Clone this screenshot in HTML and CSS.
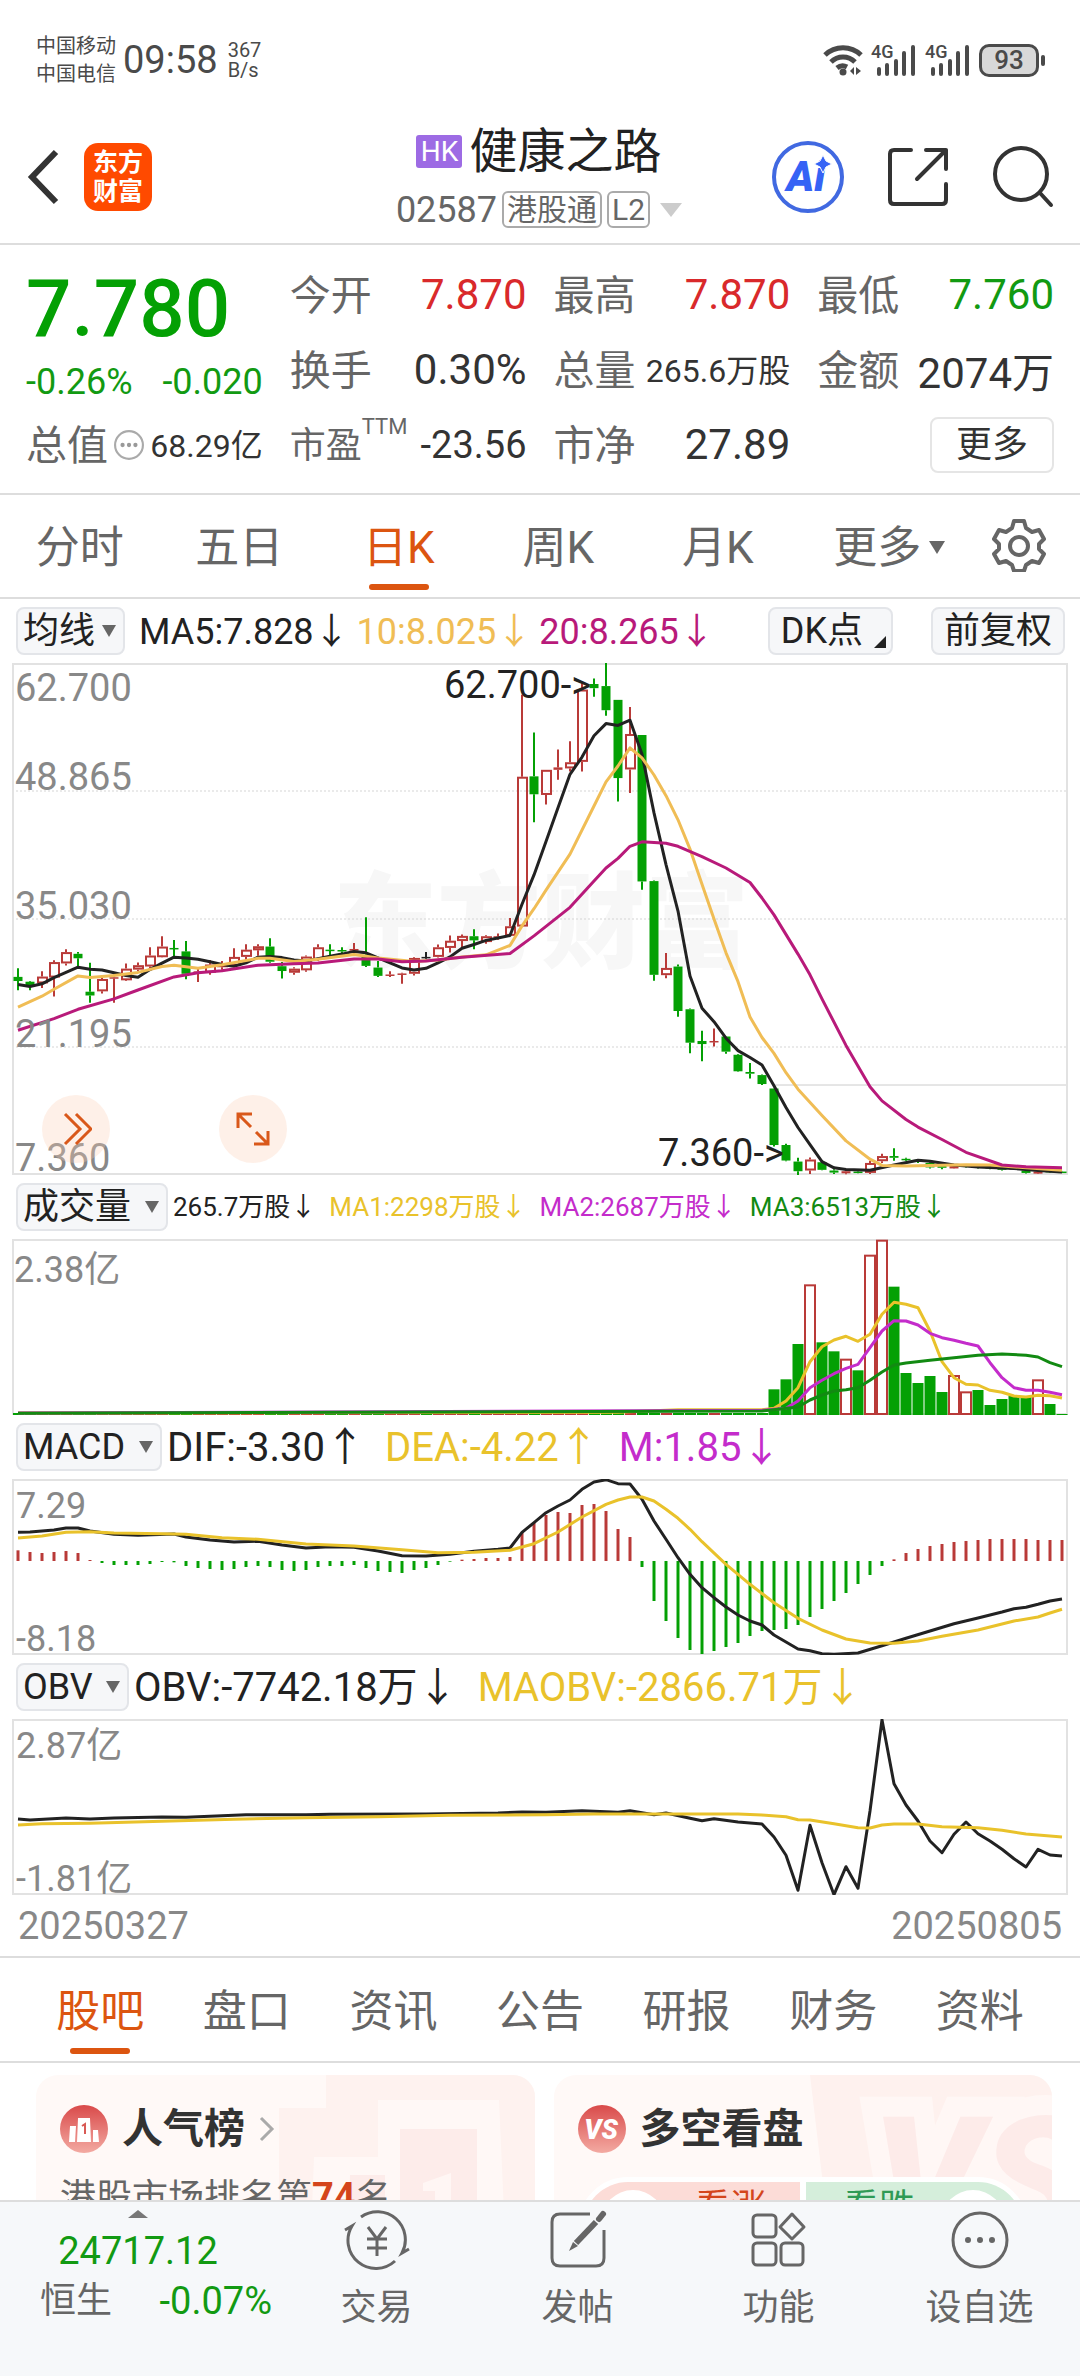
FILE: index.html
```html
<!DOCTYPE html>
<html lang="zh-CN">
<head>
<meta charset="UTF-8">
<meta name="viewport" content="width=device-width, initial-scale=1.0">
<title>健康之路 02587</title>
<link rel="stylesheet" href="styles.css">
</head>
<body>

<!-- 状态栏 -->
<div class="status">
    <div class="carriers"><span>中国移动</span><span>中国电信</span></div>
    <div class="clock">09:58</div>
    <div class="speed"><span>367</span><span>B/s</span></div>
    <div class="status-right">
        <svg class="wifi" viewBox="0 0 40 34" fill="none" stroke="#4a4a4a" stroke-width="5">
            <path d="M2 12a26 26 0 0 1 36 0"/>
            <path d="M8 19a17 17 0 0 1 24 0"/>
            <path d="M14 25a9 9 0 0 1 10-1"/>
            <circle cx="20" cy="29" r="3.5" fill="#4a4a4a" stroke="none"/>
            <path d="M27 28l4-4v8zM33 24l5 4-5 4z" fill="#4a4a4a" stroke="none"/>
        </svg>
        <div class="signal">
            <span>4G</span>
            <svg viewBox="0 0 46 34" stroke="#4a4a4a" stroke-width="4" stroke-linecap="round"><path d="M8 26v5M16 22v9M25 18v13M33 10v21M42 4v27"/></svg>
        </div>
        <div class="signal">
            <span>4G</span>
            <svg viewBox="0 0 46 34" stroke="#4a4a4a" stroke-width="4" stroke-linecap="round"><path d="M8 26v5M16 22v9M25 18v13M33 10v21M42 4v27"/></svg>
        </div>
        <div class="battery">93</div>
    </div>
</div>

<!-- 标题栏 -->
<header class="header">
    <div class="header-left">
        <button class="icon-btn" aria-label="返回">
            <svg width="36" height="56" viewBox="0 0 36 56" fill="none" stroke="#333" stroke-width="6"><path d="M32 3L8 28l24 25"/></svg>
        </button>
        <div class="logo"><span>东方</span><span>财富</span></div>
    </div>
    <div class="title">
        <h1><span class="hk">HK</span>健康之路</h1>
        <div class="code">02587<span class="tag">港股通</span><span class="tag">L2</span><i class="down"></i></div>
    </div>
    <div class="header-right">
        <button class="icon-btn" aria-label="AI">
            <svg width="72" height="72" viewBox="0 0 72 72">
                <circle cx="36" cy="36" r="34" fill="none" stroke="#4169e1" stroke-width="4"/>
                <text class="ai" x="34" y="50" text-anchor="middle">Ai</text>
                <path d="M51 14l3 6 6 3-6 3-3 6-3-6-6-3 6-3z" fill="#3563f5" stroke="#fff" stroke-width="1"/>
            </svg>
        </button>
        <button class="icon-btn" aria-label="分享">
            <svg width="64" height="62" viewBox="0 0 64 62" fill="none" stroke="#333" stroke-width="4" stroke-linecap="round" stroke-linejoin="round">
                <path d="M25 4H8q-4 0-4 4v46q0 4 4 4h48q4 0 4-4V38M40 4h20v19M60 4L31 33"/>
            </svg>
        </button>
        <button class="icon-btn" aria-label="搜索">
            <svg width="62" height="62" viewBox="0 0 62 62" fill="none" stroke="#333" stroke-width="4" stroke-linecap="round">
                <circle cx="29" cy="28" r="26"/><path d="M48 47l11 12"/>
            </svg>
        </button>
    </div>
</header>

<main>
    <!-- 行情数据 -->
    <section class="quote">
        <div class="col">
            <div class="price">7.780</div>
            <div class="change"><span>-0.26%</span><span>-0.020</span></div>
            <div class="item"><span class="name">总值</span>
                <svg width="30" height="30" viewBox="0 0 28 28"><circle cx="14" cy="14" r="13" fill="none" stroke="#aaa" stroke-width="2"/><g fill="#999"><circle cx="8" cy="14" r="2"/><circle cx="14" cy="14" r="2"/><circle cx="20" cy="14" r="2"/></g></svg>
                <span class="val small">68.29亿</span></div>
        </div>
        <div class="col">
            <div class="item"><span class="name">今开</span><span class="val red">7.870</span></div>
            <div class="item"><span class="name">换手</span><span class="val">0.30%</span></div>
            <div class="item"><span class="name pe">市盈<sup>TTM</sup></span><span class="val mid">-23.56</span></div>
        </div>
        <div class="col">
            <div class="item"><span class="name">最高</span><span class="val red">7.870</span></div>
            <div class="item"><span class="name">总量</span><span class="val small">265.6万股</span></div>
            <div class="item"><span class="name">市净</span><span class="val">27.89</span></div>
        </div>
        <div class="col">
            <div class="item"><span class="name">最低</span><span class="val green">7.760</span></div>
            <div class="item"><span class="name">金额</span><span class="val">2074万</span></div>
            <div class="item"><button class="more">更多</button></div>
        </div>
    </section>

    <!-- 周期 -->
    <nav class="tabs period">
        <button>分时</button>
        <button>五日</button>
        <button class="active">日K</button>
        <button>周K</button>
        <button>月K</button>
        <button><span class="more-tab">更多<i class="down"></i></span></button>
        <button class="gear" aria-label="设置">
            <svg width="54" height="54" viewBox="0 0 54 54" fill="none" stroke="#666" stroke-width="4" stroke-linejoin="round">
                <path d="M22 3h10l2 7 6 4 7-2 5 9-5 5v5l5 5-5 9-7-2-6 4-2 6H22l-2-6-6-4-7 2-5-9 5-5v-5l-5-5 5-9 7 2 6-4z"/>
                <circle cx="27" cy="28" r="9"/>
            </svg>
        </button>
    </nav>

    <!-- K线 -->
    <section class="panel">
        <div class="bar">
            <label class="pick tight"><select aria-label="主图指标"><option>均线</option></select></label>
            <div class="values">
                <span>MA5:7.828↓</span><span class="c-ma10">10:8.025↓</span><span class="c-ma20">20:8.265↓</span>
            </div>
            <div class="bar-right">
                <button class="chip corner">DK点</button>
                <button class="chip">前复权</button>
            </div>
        </div>
        <div class="chart">
            <svg id="kline" viewBox="0 0 1056 512"></svg>
            <button class="float first" aria-label="展开">
                <svg width="32" height="34" viewBox="0 0 32 34" fill="none" stroke="#d9581a" stroke-width="3"><path d="M5 2l15 15L5 32M16 2l15 15-15 15"/></svg>
            </button>
            <button class="float second" aria-label="全屏">
                <svg width="36" height="36" viewBox="0 0 36 36" fill="none" stroke="#d9581a" stroke-width="3"><path d="M3 17V3h14M3 3l13 13M33 20v13H19M33 33L21 21"/></svg>
            </button>
        </div>
    </section>

    <section class="panel">
        <div class="bar">
            <label class="pick"><select aria-label="副图一"><option>成交量</option></select></label>
            <div class="values vol">
                <span>265.7万股↓</span><span class="c-yellow">MA1:2298万股↓</span><span class="c-purple">MA2:2687万股↓</span><span class="c-green">MA3:6513万股↓</span>
            </div>
        </div>
        <div class="chart"><svg id="volume" viewBox="0 0 1056 176"></svg></div>
    </section>

    <section class="panel">
        <div class="bar">
            <label class="pick"><select aria-label="副图二"><option>MACD</option></select></label>
            <div class="values wide">
                <span>DIF:-3.30↑</span><span class="c-yellow">DEA:-4.22↑</span><span class="c-purple">M:1.85↓</span>
            </div>
        </div>
        <div class="chart"><svg id="macd" viewBox="0 0 1056 176"></svg></div>
    </section>

    <section class="panel">
        <div class="bar">
            <label class="pick"><select aria-label="副图三"><option>OBV</option></select></label>
            <div class="values wide">
                <span>OBV:-7742.18万↓</span><span class="c-yellow">MAOBV:-2866.71万↓</span>
            </div>
        </div>
        <div class="chart"><svg id="obv" viewBox="0 0 1056 176"></svg></div>
        <div class="dates"><span>20250327</span><span>20250805</span></div>
    </section>

    <!-- 资讯标签 -->
    <nav class="tabs info">
        <button class="active">股吧</button>
        <button>盘口</button>
        <button>资讯</button>
        <button>公告</button>
        <button>研报</button>
        <button>财务</button>
        <button>资料</button>
    </nav>

    <section class="cards">
        <div class="card">
            <svg class="deco" width="270" height="160" viewBox="0 0 270 160" aria-hidden="true">
                <path d="M61 0h209v160H14V33h47z" fill="#fef2ef"/>
                <path d="M113 25h121l6 135H46l3-78h64z" fill="#fff8f6"/>
                <path d="M135 54h77v106h-77zM85 100h35v60H83z" fill="#fdecea"/>
                <path d="M158 108l28-10v62h-16v-44h-12z" fill="#fff6f4"/>
            </svg>
            <div class="card-title">
                <svg width="48" height="48" viewBox="0 0 48 48">
                    <defs><linearGradient id="redFill" x1="0" y1="0" x2="0" y2="1"><stop offset="0" stop-color="#d94a4a"/><stop offset="1" stop-color="#f3aaa2"/></linearGradient></defs>
                    <circle cx="24" cy="24" r="24" fill="url(#redFill)"/>
                    <path d="M10 21h6l-1 16H9zM18 13h12l1 24H17zM33 25h5l1 12h-6z" fill="#fff"/>
                    <path d="M22 21l3-2v10" fill="none" stroke="#d95a55" stroke-width="2"/>
                </svg>
                <h2>人气榜</h2>
                <svg width="16" height="26" viewBox="0 0 16 26" fill="none" stroke="#aaa" stroke-width="3"><path d="M2 2l11 11L2 24"/></svg>
            </div>
            <p>港股市场排名第<b>74</b>名</p>
        </div>
        <div class="card">
            <svg class="deco" width="250" height="160" viewBox="0 0 250 160" aria-hidden="true">
                <path d="M8 0h242v160H27z" fill="#fef1ee"/>
                <text class="vs-back" x="70" y="163">VS</text>
                <text class="vs-front" x="70" y="163">VS</text>
            </svg>
            <div class="card-title">
                <svg width="48" height="48" viewBox="0 0 48 48">
                    <circle cx="24" cy="24" r="24" fill="url(#redFill)"/>
                    <text class="vs" x="23" y="34" text-anchor="middle">VS</text>
                </svg>
                <h2>多空看盘</h2>
            </div>
            <div class="vote">
                <button class="up"><i></i>看涨</button>
                <button class="fall">看跌<i></i></button>
            </div>
        </div>
    </section>
</main>

<!-- 底部栏 -->
<footer class="bottom">
    <div class="index">
        <i class="up-arrow"></i>
        <div class="index-num">24717.12</div>
        <div class="index-row"><span>恒生</span><span class="green">-0.07%</span></div>
    </div>
    <button>
        <svg width="66" height="60" viewBox="0 0 66 60" fill="none" stroke="#666" stroke-width="3">
            <path d="M17 7A28 28 0 0 1 58 43l7-4M51 51A28 28 0 0 1 8 16l-7 4"/>
            <path d="M24 17l9 12 9-12M23 29h20M23 38h20M33 29v17"/>
        </svg>
        交易
    </button>
    <button>
        <svg width="60" height="60" viewBox="0 0 60 60" fill="none" stroke="#666" stroke-width="3">
            <path d="M42 4H12q-8 0-8 8v36q0 8 8 8h36q8 0 8-8V20"/><path d="M48 12L28 33" stroke-width="6"/><path d="M55 4l-4 5" stroke-width="6" stroke-linecap="round"/><path d="M25 32l-4 9 9-5z" fill="#666" stroke="none"/>
        </svg>
        发帖
    </button>
    <button>
        <svg width="60" height="60" viewBox="0 0 60 60" fill="none" stroke="#666" stroke-width="3">
            <rect x="4" y="5" width="23" height="22" rx="4"/><rect x="4" y="33" width="23" height="22" rx="4"/><rect x="32" y="33" width="22" height="22" rx="4"/><path d="M43 4l12 13-12 12-12-12z" stroke-linejoin="round"/>
        </svg>
        功能
    </button>
    <button>
        <svg width="60" height="60" viewBox="0 0 60 60" fill="none" stroke="#666" stroke-width="3">
            <circle cx="30" cy="30" r="27"/><g fill="#666" stroke="none"><circle cx="18" cy="30" r="3"/><circle cx="30" cy="30" r="3"/><circle cx="42" cy="30" r="3"/></g>
        </svg>
        设自选
    </button>
</footer>

<script src="chart.js"></script>
</body>
</html>
```

FILE: styles.css
```css
* {
    box-sizing: border-box;
}

body {
    margin: 0;
    height: 100vh;
    display: flex;
    flex-direction: column;
    background: #fff;
    color: #333;
    font-family: Roboto, "Noto Sans CJK SC", sans-serif;
    font-size: 36px;
}

button {
    padding: 0;
    border: none;
    background: none;
    color: inherit;
    font: inherit;
    cursor: pointer;
}

h1, h2, p {
    margin: 0;
}

svg {
    display: block;
    flex: none;
}

.red { color: #d9292b; }
.green { color: #129a12; }
.c-ma10 { color: #f0bd55; }
.c-ma20 { color: #b81a7a; }
.c-yellow { color: #e9c22b; }
.c-purple { color: #c42ccb; }
.c-green { color: #128a12; }

/* 小三角 */
.down {
    display: inline-block;
    border: 11px solid transparent;
    border-top: 14px solid #ccc;
    border-bottom: none;
}

/* 状态栏 */
.status {
    flex: none;
    display: flex;
    align-items: center;
    height: 104px;
    padding: 16px 34px 0 36px;
    color: #4a4a4a;
}

.carriers {
    display: flex;
    flex-direction: column;
    font-size: 20px;
    line-height: 28px;
}

.clock {
    margin: 0 10px 0 7px;
    font-size: 38px;
}

.speed {
    display: flex;
    flex-direction: column;
    font-size: 20px;
    line-height: 20px;
}

.status-right {
    display: flex;
    align-items: center;
    gap: 8px;
    margin-left: auto;
}

.wifi {
    width: 40px;
    height: 34px;
}

.signal {
    position: relative;
    width: 46px;
    height: 34px;
}

.signal span {
    position: absolute;
    top: 0;
    left: 0;
    font-size: 18px;
    line-height: 18px;
    font-weight: 500;
}

.battery {
    position: relative;
    width: 60px;
    height: 33px;
    margin-right: 7px;
    border: 3px solid #4a4a4a;
    border-radius: 10px;
    background: #d8d8d8;
    font-size: 26px;
    line-height: 27px;
    font-weight: 500;
    text-align: center;
}

.battery::after {
    content: "";
    position: absolute;
    top: 8px;
    right: -9px;
    width: 4px;
    height: 11px;
    border-radius: 2px;
    background: #4a4a4a;
}

/* 标题栏 */
.header {
    flex: none;
    display: grid;
    grid-template-columns: 1fr auto 1fr;
    align-items: center;
    height: 141px;
    padding: 6px 26px 0 24px;
    border-bottom: 2px solid #ddd;
}

.header-left {
    display: flex;
    align-items: center;
    gap: 24px;
}

.logo {
    display: flex;
    flex-direction: column;
    align-items: center;
    justify-content: center;
    width: 68px;
    height: 68px;
    border-radius: 14px;
    background: #ff4a00;
    color: #fff;
    font-size: 25px;
    line-height: 29px;
    font-weight: 700;
}

.title {
    padding-top: 8px;
    text-align: center;
}

.title h1 {
    display: flex;
    align-items: center;
    justify-content: center;
    gap: 7px;
    font-size: 48px;
    line-height: 58px;
    font-weight: 400;
    color: #222;
}

.hk {
    width: 46px;
    height: 33px;
    border-radius: 3px;
    background: #9d6be4;
    color: #fff;
    font-size: 28px;
    line-height: 33px;
}

.code {
    display: flex;
    align-items: center;
    justify-content: center;
    gap: 5px;
    line-height: 58px;
    color: #666;
}

.tag {
    padding: 0 3px;
    border: 2px solid #aaa;
    border-radius: 6px;
    font-size: 30px;
    line-height: 33px;
}

.code .down {
    margin-left: 5px;
}

.header-right {
    display: flex;
    align-items: center;
    justify-content: flex-end;
    gap: 42px;
}

.ai {
    fill: #3563f5;
    font-family: Roboto, sans-serif;
    font-size: 42px;
    font-style: italic;
    font-weight: 900;
}

/* 行情 */
main {
    flex: 1;
    min-height: 0;
    overflow: hidden;
}

.quote {
    display: grid;
    grid-template-columns: repeat(4, 1fr);
    gap: 27px;
    height: 250px;
    padding: 12px 26px 0;
    border-bottom: 2px solid #ddd;
}

.col {
    display: flex;
    flex-direction: column;
    min-width: 0;
}

.price {
    height: 100px;
    font-size: 80px;
    line-height: 104px;
    font-weight: 500;
    color: #04a004;
}

.change {
    display: flex;
    justify-content: space-between;
    height: 50px;
    font-size: 36px;
    line-height: 50px;
    color: #129a12;
}

.item {
    display: flex;
    align-items: center;
    justify-content: space-between;
    height: 75px;
    white-space: nowrap;
}

.name {
    padding-bottom: 5px;
    font-size: 41px;
    color: #666;
}

.name.pe {
    display: flex;
    align-items: center;
    font-size: 36px;
}

.name sup {
    align-self: flex-start;
    font-size: 22px;
    line-height: 22px;
}

.val {
    font-size: 42px;
}

.val.mid {
    font-size: 38px;
}

.val.small {
    padding-bottom: 3px;
    font-size: 32px;
}

.more {
    width: 124px;
    height: 56px;
    margin-left: auto;
    border: 2px solid #e5e5e5;
    border-radius: 8px;
    font-size: 36px;
    line-height: 48px;
}

/* 标签 */
.tabs {
    display: flex;
    height: 104px;
    border-bottom: 2px solid #ddd;
    color: #666;
    font-size: 44px;
}

.tabs button {
    position: relative;
    flex: 1;
    padding-bottom: 4px;
}

.tabs .active {
    color: #dc5510;
}

.tabs .active::after {
    content: "";
    position: absolute;
    bottom: 7px;
    left: 50%;
    width: 60px;
    height: 6px;
    margin-left: -30px;
    border-radius: 3px;
    background: #dc5510;
}

.tabs .gear {
    flex: none;
    display: flex;
    align-items: center;
    justify-content: center;
    width: 123px;
    padding-bottom: 2px;
}

.more-tab {
    position: relative;
}

.more-tab .down {
    position: absolute;
    top: 19px;
    right: -24px;
    border-width: 13px 8px 0;
    border-top-color: #666;
}

.info {
    height: 105px;
    padding: 0 27px;
}

/* 图表 */
.panel {
    padding: 0 12px;
}

.bar {
    display: flex;
    align-items: center;
    height: 64px;
    padding: 0 3px 0 4px;
    color: #222;
    white-space: nowrap;
}

.pick {
    position: relative;
    display: flex;
}

.pick select, .chip {
    height: 48px;
    border: 2px solid #e3e5e9;
    border-radius: 8px;
    background: #f6f7f9;
    color: #222;
    font: inherit;
    line-height: 40px;
}

.pick select {
    appearance: none;
    padding: 0 34px 0 5px;
}

.pick::after {
    content: "";
    position: absolute;
    top: 18px;
    right: 9px;
    border: 7px solid transparent;
    border-top: 12px solid #666;
    border-bottom: none;
}

.pick.tight select {
    padding-right: 27px;
}

.values {
    display: flex;
    gap: 7px;
    padding: 0 0 6px 14px;
}

.values.vol {
    gap: 13px;
    padding-left: 5px;
    font-size: 26px;
}

.values.wide {
    gap: 20px;
    padding-left: 5px;
    font-size: 40px;
}

.bar-right {
    display: flex;
    gap: 38px;
    margin-left: auto;
}

.chip {
    position: relative;
    padding: 0 11px;
}

.chip.corner {
    padding-right: 28px;
}

.chip.corner::after {
    content: "";
    position: absolute;
    right: 5px;
    bottom: 5px;
    border: 6px solid #222;
    border-top-color: transparent;
    border-left-color: transparent;
}

.chart {
    position: relative;
}

.chart > svg {
    width: 100%;
    height: auto;
}

.chart text {
    font-family: Roboto, "Noto Sans CJK SC", sans-serif;
}

.float {
    position: absolute;
    bottom: 12px;
    display: flex;
    align-items: center;
    justify-content: center;
    width: 68px;
    height: 68px;
    border-radius: 50%;
    background: rgba(251, 205, 178, 0.3);
}

.float.first {
    left: 30px;
}

.float.second {
    left: 207px;
}

.dates {
    display: flex;
    justify-content: space-between;
    height: 63px;
    margin: 0 -12px;
    padding: 0 18px;
    border-bottom: 2px solid #ddd;
    color: #888;
    font-size: 38px;
    line-height: 63px;
}

/* 卡片 */
.cards {
    display: grid;
    grid-template-columns: 1fr 1fr;
    gap: 19px;
    padding: 12px 28px 0 36px;
}

.card {
    position: relative;
    height: 240px;
    padding: 30px 24px 0;
    border-radius: 22px;
    background: #fff9f7;
    overflow: hidden;
}

.deco {
    position: absolute;
    top: 0;
    right: 0;
}

.vs, .vs-back, .vs-front {
    fill: #fff;
    font-family: Roboto, sans-serif;
    font-size: 27px;
    font-style: italic;
    font-weight: 900;
}

.vs-back, .vs-front {
    fill: #fdebe9;
    font-size: 170px;
}

.vs-back {
    stroke: #fff7f5;
    stroke-width: 40px;
}

.card-title {
    position: relative;
    display: flex;
    align-items: center;
    gap: 14px;
    height: 48px;
}

.card h2 {
    font-size: 41px;
    line-height: 48px;
    font-weight: 700;
}

.card p {
    position: relative;
    margin-top: 18px;
    line-height: 52px;
    color: #666;
}

.card p b {
    color: #d4451c;
    font-size: 38px;
}

.vote {
    position: relative;
    display: flex;
    gap: 6px;
    height: 100px;
    margin-top: 24px;
    border: 5px solid #fff;
    border-radius: 50px;
    background: #fff;
    overflow: hidden;
}

.vote button {
    flex: 1;
    display: flex;
    align-items: flex-start;
    padding-top: 8px;
    line-height: 36px;
}

.vote i {
    width: 64px;
    height: 64px;
    border-radius: 50%;
    background: #fff;
}

.vote .up {
    gap: 30px;
    padding-left: 18px;
    background: #fcdcd7;
    color: #d4451c;
}

.vote .fall {
    justify-content: flex-end;
    gap: 26px;
    padding-right: 18px;
    background: #d5eedb;
    color: #2f9a55;
}

/* 底部栏 */
.bottom {
    flex: none;
    display: grid;
    grid-template-columns: 276px repeat(4, 1fr);
    height: 176px;
    border-top: 2px solid #ddd;
    background: #f6f8fa;
    color: #666;
}

.bottom button {
    display: flex;
    flex-direction: column;
    align-items: center;
    gap: 14px;
    padding-top: 8px;
    line-height: 48px;
}

.index {
    display: flex;
    flex-direction: column;
    align-items: center;
}

.up-arrow {
    margin-top: 8px;
    border: 10px solid transparent;
    border-top: none;
    border-bottom: 8px solid #777;
}

.index-num {
    margin-top: 9px;
    font-size: 38px;
    line-height: 48px;
    color: #129a12;
}

.index-row {
    align-self: stretch;
    display: flex;
    justify-content: space-between;
    padding: 2px 4px 0 40px;
    line-height: 48px;
}

.index-row .green {
    font-size: 38px;
}
```

FILE: chart.js
```js
var NS = "http://www.w3.org/2000/svg";
var RED = "#b93a38", GREEN = "#04a004", BLACK = "#222222";
var YELLOW = "#e9c22b", PURPLE = "#c42ccb";

function add(svg, tag, attrs, text) {
    var el = document.createElementNS(NS, tag);
    for (var k in attrs) el.setAttribute(k, attrs[k]);
    if (text) el.textContent = text;
    svg.appendChild(el);
}

// 第 i 根的中心
function px(i) {
    return 6 + i * 12;
}

function line(svg, y, color, points) {
    var s = points.map(function(p) { return px(p[0]) + "," + y(p[1]).toFixed(1); }).join(" ");
    add(svg, "polyline", { points: s, fill: "none", stroke: color, "stroke-width": 3, "stroke-linejoin": "round" });
}

function frame(svg, h) {
    add(svg, "rect", { x: 1, y: 1, width: 1054, height: h - 2, fill: "none", stroke: "#e2e2e2", "stroke-width": 2 });
}

function label(svg, x, y, text, size, color) {
    add(svg, "text", { x: x, y: y, "font-size": size, fill: color || "#888" }, text);
}

// 颜色, 最高, 实体上沿, 实体下沿, 最低
var candles = [
    ["g",921,946,958,985],["g",958,960,970,985],["r",930,945,965,978],["r",898,903,948,1003],
    ["r",866,874,907,913],["g",874,879,892,922],["g",905,989,1000,1021],["r",946,952,988,994],
    ["r",940,947,951,1021],["r",907,922,956,958],["r",904,912,925,930],["r",860,884,916,920],
    ["r",828,858,889,890],["g",839,862,865,893],["g",842,872,937,953],["r",920,930,934,961],
    ["r",897,910,934,940],["r",900,908,918,925],["r",863,888,914,916],["r",851,867,888,905],
    ["r",851,857,869,885],["g",834,858,902,905],["g",903,915,929,951],["r",918,922,934,940],
    ["r",884,887,927,931],["r",851,860,897,900],["g",851,867,870,888],["g",860,868,872,884],
    ["r",848,865,870,885],["g",773,882,914,917],["g",900,919,943,946],["r",930,939,942,946],
    ["r",934,936,940,966],["r",889,891,937,942],["k",874,888,892,895],["r",852,860,888,890],
    ["r",826,841,862,875],["r",823,827,842,860],["g",808,828,840,866],["r",825,828,845,850],
    ["r",820,828,832,838],["r",775,799,827,827],["r",127,365,800,800],["g",237,364,416,497],
    ["r",345,345,418,446],["r",286,338,345,374],["r",262,323,341,350],["r",94,112,322,350],
    ["g",80,96,108,133],["g",35,102,172,188],["g",142,142,369,437],["r",163,241,344,412],
    ["g",244,244,669,693],["g",666,668,940,957],["r",877,920,941,950],["g",910,916,1045,1062],
    ["g",1038,1040,1137,1168],["g",1102,1132,1141,1191],["r",1096,1132,1136,1148],["g",1119,1119,1163,1169],
    ["g",1170,1172,1220,1221],["g",1196,1222,1227,1241],["g",1229,1231,1257,1260],["g",1269,1270,1434,1438],
    ["g",1430,1434,1479,1481],["g",1471,1482,1510,1521],["r",1470,1476,1508,1518],["g",1478,1484,1506,1507],
    ["g",1504,1508,1514,1518],["r",1506,1510,1516,1519],["g",1508,1511,1514,1516],["r",1480,1486,1515,1518],
    ["r",1459,1466,1481,1486],["g",1443,1466,1471,1480],["g",1471,1474,1477,1480],["g",1475,1477,1482,1486],
    ["g",1484,1486,1499,1502],["g",1491,1495,1500,1504],["r",1490,1494,1502,1503],["g",1490,1493,1497,1499],
    ["g",1494,1496,1500,1502],["g",1496,1498,1502,1504],["g",1500,1501,1506,1508],["r",1498,1501,1505,1506],
    ["g",1506,1508,1515,1517],["r",1508,1511,1517,1518],["g",1507,1509,1512,1514],["g",1510,1511,1514,1515]
];

function drawKline() {
    var svg = document.getElementById("kline");
    function y(v) { return (v - 35) * 512 / 1486; }

    add(svg, "text", { x: 529, y: 297, "font-size": 104, "font-weight": 900, "text-anchor": "middle", fill: "#f7f7f7" }, "东方财富");
    [128, 256, 384].forEach(function(gy) {
        add(svg, "line", { x1: 0, x2: 1056, y1: gy, y2: gy, stroke: "#d5d5d5", "stroke-width": 1, "stroke-dasharray": "2 2" });
    });
    add(svg, "line", { x1: 762, x2: 1056, y1: 422, y2: 422, stroke: "#ccc", "stroke-width": 1 });
    frame(svg, 512);

    candles.forEach(function(c, i) {
        var color = c[0] === "g" ? GREEN : c[0] === "r" ? RED : BLACK;
        var x = px(i), top = y(c[2]), h = y(c[3]) - top;
        add(svg, "line", { x1: x, x2: x, y1: y(c[1]), y2: top, stroke: color, "stroke-width": 2 });
        add(svg, "line", { x1: x, x2: x, y1: top + h, y2: y(c[4]), stroke: color, "stroke-width": 2 });
        if (c[0] === "r" && h > 3) {
            add(svg, "rect", { x: x - 4, y: top + 1, width: 9, height: h - 2, fill: "none", stroke: color, "stroke-width": 2 });
        } else {
            add(svg, "rect", { x: x - 4.5, y: top, width: 9, height: Math.max(h, 1.5), fill: color });
        }
    });

    line(svg, y, BLACK, [[0,968],[1,974],[2,966],[3,948],[5,918],[6,924],[7,926],[8,934],[9,942],[10,947],[11,925],[12,906],[13,889],[14,891],[15,895],[16,902],[17,910],[18,915],[19,905],[20,889],[21,887],[22,890],[23,897],[24,900],[25,893],[26,886],[27,880],[28,872],[29,876],[30,891],[31,905],[32,920],[33,926],[34,921],[35,905],[36,888],[37,863],[38,852],[39,840],[40,833],[41,826],[42,735],[43,650],[44,553],[45,455],[46,358],[47,308],[48,246],[49,211],[50,216],[51,201],[52,300],[53,470],[54,620],[55,755],[56,943],[57,1037],[58,1076],[59,1124],[60,1160],[61,1180],[62,1202],[63,1262],[64,1325],[65,1383],[66,1433],[67,1482],[68,1500],[69,1505],[71,1507],[73,1492],[75,1478],[76,1481],[78,1492],[80,1498],[83,1502],[85,1508],[87,1512]]);
    line(svg, y, "#f0bd55", [[0,1034],[1,1018],[2,1002],[3,982],[5,943],[6,948],[8,942],[10,933],[12,916],[13,912],[15,921],[17,911],[20,892],[21,892],[23,901],[25,895],[28,881],[30,891],[33,901],[35,897],[37,888],[39,882],[41,855],[42,798],[43,748],[44,694],[46,590],[48,450],[49,380],[50,334],[51,281],[52,310],[53,360],[54,420],[55,490],[56,575],[57,677],[58,778],[59,876],[60,960],[61,1062],[62,1122],[63,1168],[64,1224],[65,1272],[67,1348],[69,1422],[71,1475],[72,1493],[74,1495],[76,1493],[79,1491],[81,1492],[84,1500],[87,1507]]);
    line(svg, y, "#b81a7a", [[0,1101],[3,1067],[5,1040],[8,1010],[10,984],[13,946],[15,934],[17,928],[20,912],[23,908],[25,906],[28,894],[30,894],[32,902],[34,900],[37,889],[41,878],[43,827],[46,744],[48,668],[49,630],[50,602],[51,567],[52,554],[54,558],[55,567],[57,597],[59,630],[61,672],[62,717],[63,766],[65,880],[66,940],[67,1010],[69,1145],[71,1265],[72,1306],[74,1360],[75,1382],[77,1418],[79,1455],[82,1492],[84,1497],[87,1500]]);

    label(svg, 3, 38, "62.700", 38);
    label(svg, 3, 127, "48.865", 38);
    label(svg, 3, 256, "35.030", 38);
    label(svg, 3, 384, "21.195", 38);
    label(svg, 3, 508, "7.360", 38);
    label(svg, 432, 35, "62.700->", 38, BLACK);
    label(svg, 646, 503, "7.360->", 38, BLACK);
}

// 副图共用的纵坐标
function sub(v) {
    return (v - 204) / 3;
}

function drawVolume() {
    var svg = document.getElementById("volume");
    frame(svg, 176);
    for (var i = 0; i < 63; i++) {
        add(svg, "rect", { x: px(i) - 5, y: 174, width: 11, height: 2, fill: candles[i][0] === "r" ? RED : GREEN });
    }
    var bars = [655,625,519,340,514,541,563,598,251,206,347,606,636,615,663,612,661,657,702,684,675,678,625,699,729];
    var reds = [66, 69, 71, 72, 78, 79, 85];
    bars.forEach(function(v, n) {
        var i = 63 + n, y = sub(v);
        if (reds.indexOf(i) >= 0) {
            add(svg, "rect", { x: px(i) - 5, y: y + 1, width: 10, height: 174 - y, fill: "#fff", stroke: RED, "stroke-width": 2 });
        } else {
            add(svg, "rect", { x: px(i) - 5.5, y: y, width: 11, height: 176 - y, fill: GREEN });
        }
    });
    line(svg, sub, YELLOW, [[0,726],[50,724],[55,716],[62,716],[63,712],[64,690],[65,650],[66,572],[67,527],[68,507],[69,496],[70,511],[71,490],[72,430],[73,394],[74,400],[75,410],[76,480],[77,572],[78,620],[79,640],[80,642],[81,658],[82,664],[83,675],[84,678],[85,673],[86,674],[87,681]]);
    line(svg, sub, PURPLE, [[0,726],[62,718],[64,712],[65,690],[66,650],[67,628],[68,608],[69,592],[70,580],[71,530],[72,480],[73,449],[74,450],[75,462],[76,487],[77,500],[78,508],[79,517],[80,525],[81,575],[82,620],[83,650],[84,658],[85,658],[86,664],[87,671]]);
    line(svg, sub, "#128a12", [[0,727],[62,720],[65,708],[66,687],[67,672],[68,660],[69,656],[70,650],[71,628],[72,603],[73,582],[74,576],[76,568],[78,560],[80,553],[82,549],[84,553],[85,558],[86,575],[87,587]]);
    label(svg, 2, 43, "2.38亿", 36);
}

function drawMacd() {
    var svg = document.getElementById("macd");
    frame(svg, 176);
    var hist = [418,423,426,423,420,426,447,456,462,462,462,459,453,454,465,471,474,477,474,468,465,468,477,480,477,468,465,465,462,471,480,483,486,477,471,462,452,446,444,441,441,438,364,335,312,303,306,282,279,300,354,378,468,570,630,681,717,729,720,708,696,675,660,657,654,642,618,594,570,546,519,492,465,445,426,414,405,399,393,390,387,384,384,384,384,387,387,387];
    hist.forEach(function(v, i) {
        add(svg, "line", { x1: px(i), x2: px(i), y1: 82, y2: sub(v), stroke: v < 450 ? RED : GREEN, "stroke-width": 3 });
    });
    line(svg, sub, BLACK, [[0,364],[1,363],[3,357],[4,351],[5,351],[6,360],[8,370],[10,373],[13,369],[14,378],[16,387],[18,393],[20,391],[22,402],[24,411],[26,407],[28,409],[30,420],[32,434],[34,435],[36,430],[38,421],[40,415],[41,411],[42,364],[43,335],[44,305],[45,285],[46,267],[47,235],[48,213],[49,206],[50,218],[51,219],[52,265],[53,330],[54,385],[55,440],[56,490],[57,530],[58,560],[59,588],[60,612],[61,630],[62,642],[63,672],[64,693],[65,714],[66,719],[67,728],[68,730],[70,726],[72,704],[74,682],[76,660],[78,638],[80,621],[82,603],[83,593],[84,589],[85,580],[86,570],[87,564]]);
    line(svg, sub, YELLOW, [[0,381],[2,375],[4,364],[6,362],[8,366],[12,368],[14,370],[17,380],[20,385],[24,399],[28,405],[32,416],[35,425],[38,424],[41,418],[43,398],[45,363],[47,318],[49,280],[50,267],[51,258],[52,258],[53,270],[54,295],[55,322],[56,355],[57,392],[59,460],[61,520],[63,575],[65,622],[67,657],[69,684],[71,696],[73,697],[75,690],[77,676],[80,657],[83,630],[85,618],[86,606],[87,595]]);
    label(svg, 4, 39, "7.29", 36);
    label(svg, 4, 172, "-8.18", 36);
}

function drawObv() {
    var svg = document.getElementById("obv");
    frame(svg, 176);
    line(svg, sub, BLACK, [[0,504],[1,507],[4,501],[6,504],[8,501],[12,498],[14,499],[19,491],[24,491],[26,490],[34,489],[40,486],[42,483],[44,484],[47,479],[50,484],[51,479],[53,491],[54,486],[56,502],[57,509],[58,503],[60,513],[62,519],[63,558],[64,613],[65,718],[66,523],[67,635],[68,731],[69,647],[70,712],[71,480],[72,206],[73,398],[74,462],[75,510],[76,570],[77,605],[78,550],[79,513],[80,548],[81,570],[82,595],[83,623],[84,648],[85,595],[86,612],[87,615]]);
    line(svg, sub, YELLOW, [[0,522],[2,518],[6,517],[12,511],[18,505],[24,500],[30,497],[36,493],[44,491],[48,489],[60,489],[62,492],[64,497],[65,506],[66,507],[68,518],[70,530],[71,531],[72,522],[73,519],[75,519],[77,527],[80,530],[82,538],[84,549],[87,558]]);
    label(svg, 4, 39, "2.87亿", 36);
    label(svg, 4, 172, "-1.81亿", 36);
}

drawKline();
drawVolume();
drawMacd();
drawObv();
```
